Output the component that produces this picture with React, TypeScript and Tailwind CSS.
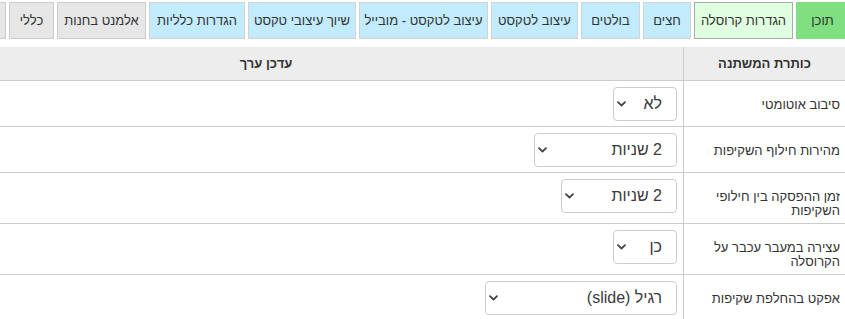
const tabs = [
	{ label: "תוכן", w: "w-[49px] pl-[4px]", cls: "bg-[#80df80] border-[#80df80]" },
	{ label: "הגדרות קרוסלה", w: "w-[99px]", cls: "bg-[#e0ffe0] border-[#aaaaaa]" },
	{ label: "חצים", w: "w-[48px]", cls: "bg-[#c2ebfd] border-[#d2d2d2]" },
	{ label: "בולטים", w: "w-[59px]", cls: "bg-[#c2ebfd] border-[#d2d2d2]" },
	{ label: "עיצוב לטקסט", w: "w-[87px]", cls: "bg-[#c2ebfd] border-[#d2d2d2]" },
	{ label: "עיצוב לטקסט - מובייל", w: "w-[129px]", cls: "bg-[#c2ebfd] border-[#d2d2d2]" },
	{ label: "שיוך עיצובי טקסט", w: "w-[108px]", cls: "bg-[#c2ebfd] border-[#d2d2d2]" },
	{ label: "הגדרות כלליות", w: "w-[96px]", cls: "bg-[#c2ebfd] border-[#d2d2d2]" },
	{ label: "אלמנט בחנות", w: "w-[89px]", cls: "bg-[#e6e6e6] border-[#cccccc]" },
	{ label: "כללי", w: "w-[45px]", cls: "bg-[#e6e6e6] border-[#cccccc]" },
	{ label: "", w: "w-[60px]", cls: "bg-[#e6e6e6] border-[#cccccc]" },
];

const rows = [
	{ label: "סיבוב אוטומטי", value: "לא", options: ["לא", "כן"], w: "w-[64px]" },
	{ label: "מהירות חילוף השקיפות", value: "2 שניות", options: ["1 שניות", "2 שניות", "3 שניות"], w: "w-[143px]" },
	{ label: "זמן ההפסקה בין חילופי השקיפות", value: "2 שניות", options: ["1 שניות", "2 שניות", "5 שניות"], w: "w-[116px]" },
	{ label: "עצירה במעבר עכבר על הקרוסלה", value: "כן", options: ["לא", "כן"], w: "w-[64px]" },
	{ label: "אפקט בהחלפת שקיפות", value: "רגיל (slide)", options: ["רגיל (slide)", "דהייה (fade)"], w: "w-[192px]" },
];

function Select({ value, options, w }: { value: string; options: string[]; w: string }) {
	return (
		<span className="relative inline-block align-baseline">
			<select
				defaultValue={value}
				className={`${w} h-[34px] appearance-none rounded-[4px] border border-[#cccccc] bg-white pr-[14px] pl-5 text-[16px] text-[#3a3a3a] outline-none`}
			>
				{options.map((o) => (
					<option key={o} value={o}>
						{o}
					</option>
				))}
			</select>
			<svg
				className="pointer-events-none absolute left-[4px] top-[14px]"
				width="9"
				height="6"
				viewBox="0 0 9 6"
				fill="none"
			>
				<path d="M1 1.2l3.5 3.3L8 1.2" stroke="#444" strokeWidth="1.8" strokeLinecap="round" strokeLinejoin="round" />
			</svg>
		</span>
	);
}

export default function App() {
	return (
		<div
			dir="rtl"
			className="h-[319px] w-[845px] overflow-hidden bg-white text-[13px] text-[#333333] font-['Liberation_Sans','DejaVu_Sans',sans-serif]"
		>
			<div className="flex gap-[3px] pt-[2px]">
				{tabs.map((t, i) => (
					<div
						key={i}
						className={`${t.w} ${t.cls} flex h-[37px] flex-none items-center justify-center whitespace-nowrap border`}
					>
						{t.label}
					</div>
				))}
			</div>
			<table className="mt-[8px] w-[996px] table-fixed border-separate border-spacing-0">
				<thead>
					<tr>
						<th className="h-[34px] w-[162px] border-b border-l border-[#cccccc] bg-[#ededed] text-center font-bold">
							כותרת המשתנה
						</th>
						<th className="h-[34px] border-b border-[#cccccc] bg-[#ededed] text-center font-bold">
							עדכן ערך
						</th>
					</tr>
				</thead>
				<tbody>
					{rows.map((r) => (
						<tr key={r.label}>
							<td className="border-b border-l border-[#cccccc] px-[5px] pb-[5px] pt-[5px] align-baseline leading-[14px]">
								{r.label}
							</td>
							<td className="border-b border-[#cccccc] pb-[5px] pl-2 pr-[6px] pt-[6px] text-right align-baseline">
								<Select value={r.value} options={r.options} w={r.w} />
							</td>
						</tr>
					))}
				</tbody>
			</table>
		</div>
	);
}
